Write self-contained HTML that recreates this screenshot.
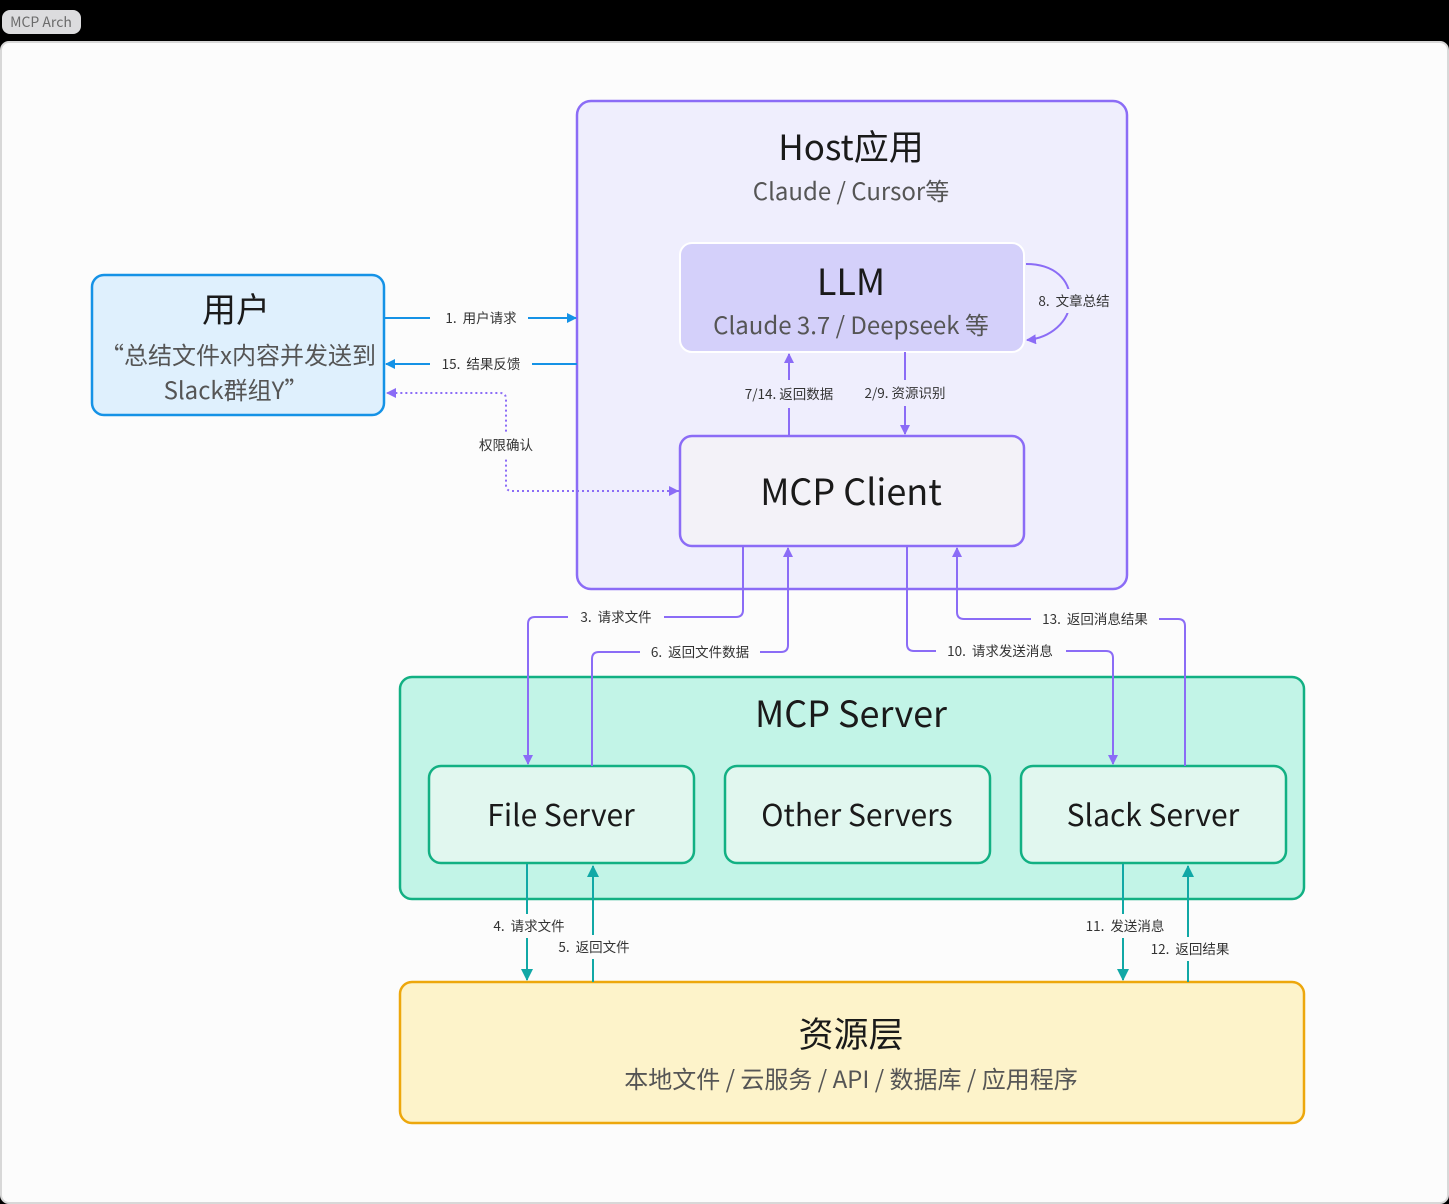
<!DOCTYPE html>
<html><head><meta charset="utf-8"><style>
html,body{margin:0;padding:0;background:#000;width:1449px;height:1204px;overflow:hidden}
svg{display:block}
text{font-family:"Noto Sans CJK SC","Liberation Sans",sans-serif;white-space:pre}
</style></head><body>
<svg width="1449" height="1204" viewBox="0 0 1449 1204" xmlns="http://www.w3.org/2000/svg">
<defs>
<marker id="ap" markerWidth="10" markerHeight="10" refX="9" refY="5" orient="auto" markerUnits="userSpaceOnUse"><path d="M0,0 L10,5 L0,10 z" fill="#8b6cf6"/></marker>
<marker id="ab" markerWidth="10" markerHeight="10" refX="9" refY="5" orient="auto" markerUnits="userSpaceOnUse"><path d="M0,0 L10,5 L0,10 z" fill="#1592e6"/></marker>
<marker id="at" markerWidth="12" markerHeight="12" refX="11" refY="6" orient="auto" markerUnits="userSpaceOnUse"><path d="M0,0 L12,6 L0,12 z" fill="#11a8a6"/></marker>
</defs>
<rect x="2" y="10" width="79" height="24" rx="8" fill="#dcdcde"/>
<text x="41" y="27" font-size="14" fill="#6b6b6b" text-anchor="middle">MCP Arch</text>
<rect x="1" y="42" width="1447" height="1161" rx="8" fill="#fcfcfc" stroke="#d8d8d8" stroke-width="2"/>

<rect x="577" y="101" width="550" height="488" rx="14" fill="#efeefd" stroke="#8b6cf6" stroke-width="2.5"/>
<text x="851" y="160" font-size="35" fill="#1a1a1a" text-anchor="middle">Host应用</text>
<text x="851" y="200" font-size="24" fill="#555" text-anchor="middle">Claude / Cursor等</text>
<rect x="680" y="243" width="344" height="109" rx="12" fill="#d4d0fa" stroke="#fff" stroke-width="2"/>
<text x="851" y="295" font-size="36" fill="#1a1a1a" text-anchor="middle">LLM</text>
<text x="851" y="334" font-size="24" fill="#555" text-anchor="middle">Claude 3.7 / Deepseek 等</text>
<rect x="680" y="436" width="344" height="110" rx="12" fill="#f3f2f8" stroke="#8b6cf6" stroke-width="2.5"/>
<text x="851" y="505" font-size="36" fill="#1a1a1a" text-anchor="middle">MCP Client</text>

<rect x="92" y="275" width="292" height="140" rx="12" fill="#dff0fd" stroke="#1592e6" stroke-width="2.5"/>
<text x="236" y="322" font-size="34" fill="#1a1a1a" text-anchor="middle">用户</text>
<text x="238" y="364" font-size="24" fill="#555" text-anchor="middle">“总结文件x内容并发送到</text>
<text x="236" y="399" font-size="24" fill="#555" text-anchor="middle">Slack群组Y”</text>

<rect x="400" y="677" width="904" height="222" rx="12" fill="#c2f4e7" stroke="#12b083" stroke-width="2.5"/>
<text x="851" y="727" font-size="36" fill="#1a1a1a" text-anchor="middle">MCP Server</text>
<rect x="429" y="766" width="265" height="97" rx="12" fill="#e1f7ef" stroke="#12b083" stroke-width="2.5"/>
<text x="561" y="826" font-size="30" fill="#1a1a1a" text-anchor="middle">File Server</text>
<rect x="725" y="766" width="265" height="97" rx="12" fill="#e1f7ef" stroke="#12b083" stroke-width="2.5"/>
<text x="857" y="826" font-size="30" fill="#1a1a1a" text-anchor="middle">Other Servers</text>
<rect x="1021" y="766" width="265" height="97" rx="12" fill="#e1f7ef" stroke="#12b083" stroke-width="2.5"/>
<text x="1153" y="826" font-size="30" fill="#1a1a1a" text-anchor="middle">Slack Server</text>

<rect x="400" y="982" width="904" height="141" rx="12" fill="#fdf3ca" stroke="#eda70c" stroke-width="2.5"/>
<text x="851" y="1047" font-size="35" fill="#1a1a1a" text-anchor="middle">资源层</text>
<text x="851" y="1088" font-size="24" fill="#555" text-anchor="middle">本地文件 / 云服务 / API / 数据库 / 应用程序</text>

<g fill="none" stroke-width="2">
<path d="M384,318 H576" stroke="#1592e6" marker-end="url(#ab)"/>
<path d="M577,364 H386" stroke="#1592e6" marker-end="url(#ab)"/>
<path d="M679,491 H512 q-6 0 -6 -6 V399 q0 -6 -6 -6 H387" stroke="#8b6cf6" stroke-dasharray="2,3" marker-end="url(#ap)"/>
<path d="M670,491 H678" stroke="#8b6cf6" marker-end="url(#ap)"/>
<path d="M789,436 V354" stroke="#8b6cf6" marker-end="url(#ap)"/>
<path d="M905,352 V434" stroke="#8b6cf6" marker-end="url(#ap)"/>
<path d="M1026,264 C1055,264 1070,280 1070,300 C1070,322 1050,338 1027,340" stroke="#8b6cf6" marker-end="url(#ap)"/>
<path d="M743,546 V610 q0 7 -7 7 H535 q-7 0 -7 7 V764" stroke="#8b6cf6" marker-end="url(#ap)"/>
<path d="M592,766 V659 q0 -7 7 -7 H781 q7 0 7 -7 V548" stroke="#8b6cf6" marker-end="url(#ap)"/>
<path d="M907,546 V644 q0 7 7 7 H1106 q7 0 7 7 V764" stroke="#8b6cf6" marker-end="url(#ap)"/>
<path d="M1185,766 V626 q0 -7 -7 -7 H964 q-7 0 -7 -7 V548" stroke="#8b6cf6" marker-end="url(#ap)"/>
<path d="M527,864 V980" stroke="#11a8a6" marker-end="url(#at)"/>
<path d="M593,982 V866" stroke="#11a8a6" marker-end="url(#at)"/>
<path d="M1123,864 V980" stroke="#11a8a6" marker-end="url(#at)"/>
<path d="M1188,982 V866" stroke="#11a8a6" marker-end="url(#at)"/>
</g>

<g font-size="13.5" fill="#333" text-anchor="middle">
<rect x="430" y="308" width="98" height="20" fill="#fcfcfc"/><text x="481" y="323">1.  用户请求</text>
<rect x="430" y="354" width="102" height="20" fill="#fcfcfc"/><text x="481" y="369">15.  结果反馈</text>
<rect x="474" y="432" width="64" height="26" fill="#fcfcfc"/><text x="506" y="450">权限确认</text>
<rect x="740" y="380" width="98" height="28" fill="#efeefd"/><text x="789" y="399">7/14. 返回数据</text>
<rect x="860" y="380" width="90" height="26" fill="#efeefd"/><text x="905" y="398">2/9. 资源识别</text>
<rect x="1031" y="289" width="86" height="24" fill="#efeefd"/><text x="1074" y="306">8.  文章总结</text>
<rect x="568" y="607" width="96" height="20" fill="#fcfcfc"/><text x="616" y="622">3.  请求文件</text>
<rect x="640" y="642" width="120" height="20" fill="#fcfcfc"/><text x="700" y="657">6.  返回文件数据</text>
<rect x="936" y="641" width="130" height="20" fill="#fcfcfc"/><text x="1000" y="656">10.  请求发送消息</text>
<rect x="1031" y="609" width="128" height="20" fill="#fcfcfc"/><text x="1095" y="624">13.  返回消息结果</text>
<rect x="486" y="914" width="86" height="24" fill="#fcfcfc"/><text x="529" y="931">4.  请求文件</text>
<rect x="551" y="935" width="86" height="24" fill="#fcfcfc"/><text x="594" y="952">5.  返回文件</text>
<rect x="1078" y="914" width="94" height="24" fill="#fcfcfc"/><text x="1125" y="931">11.  发送消息</text>
<rect x="1143" y="937" width="94" height="24" fill="#fcfcfc"/><text x="1190" y="954">12.  返回结果</text>
</g>
</svg>
</body></html>
